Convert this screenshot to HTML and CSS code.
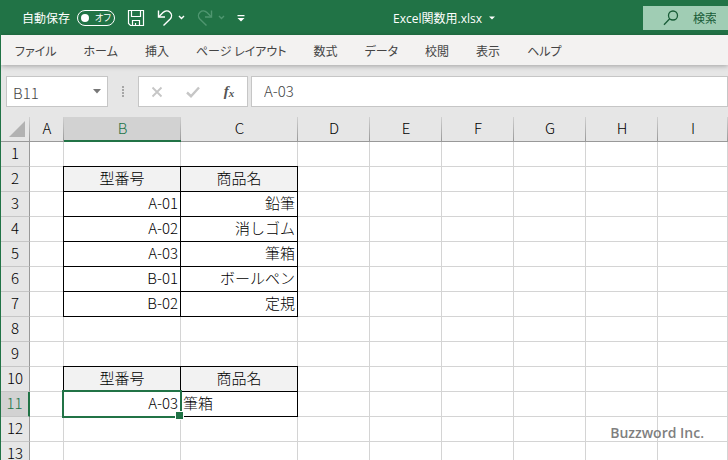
FILE: index.html
```html
<!DOCTYPE html>
<html lang="ja">
<head>
  <meta charset="UTF-8">
  <meta name="viewport" content="width=device-width, initial-scale=1">
  <title>Excel関数用.xlsx</title>
  <link rel="stylesheet" href="styles.css">
</head>
<body>

<header class="title-bar">
  <div class="quick-access">
    <label class="autosave">
      自動保存
      <span class="toggle"><input type="checkbox" class="toggle-dot">オフ</span>
    </label>
    <button class="icon-btn save-btn" aria-label="上書き保存">
      <svg width="18" height="18" viewBox="0 0 18 18" fill="none" stroke="currentColor" stroke-width="1.2">
        <path d="M1.5 1.5h15v15H3.5l-2-2z"/>
        <path d="M4.5 1.5v6h9v-6M5.5 16.5v-5h7v5M8.5 16.5v-2.5"/>
      </svg>
    </button>
    <button class="icon-btn" aria-label="元に戻す">
      <svg width="16" height="18" viewBox="0 0 16 18" fill="none" stroke="currentColor" stroke-width="1.4">
        <path d="M1.5 1.5v6.5h6.5"/>
        <path d="M1.8 7.7L6 3.6C8 1.6 11 1.4 13 3.2c2 1.9 2 4.8 0.2 6.7L6.5 16.5"/>
      </svg>
      <svg class="caret" width="7" height="5" viewBox="0 0 7 5" fill="none" stroke="currentColor" stroke-width="1.4"><path d="M1 1l2.5 2.5L6 1"/></svg>
    </button>
    <button class="icon-btn redo-btn" aria-label="やり直し" disabled>
      <svg width="16" height="18" viewBox="0 0 16 18" fill="none" stroke="currentColor" stroke-width="1.4">
        <path d="M14.5 1.5v6.5H8"/>
        <path d="M14.2 7.7L10 3.6C8 1.6 5 1.4 3 3.2c-2 1.9-2 4.8-0.2 6.7L9.5 16.5"/>
      </svg>
      <svg class="caret" width="7" height="5" viewBox="0 0 7 5" fill="none" stroke="currentColor" stroke-width="1.4"><path d="M1 1l2.5 2.5L6 1"/></svg>
    </button>
    <button class="icon-btn" aria-label="クイック アクセス ツール バーのユーザー設定">
      <svg width="8" height="8" viewBox="0 0 8 8" fill="currentColor"><path d="M0.5 1h7v1.2h-7zM0.5 4h7L4 7.5z"/></svg>
    </button>
  </div>
  <button class="file-name">Excel関数用.xlsx
    <svg width="6" height="4" viewBox="0 0 6 4" fill="currentColor"><path d="M0 0.5h6L3 3.5z"/></svg>
  </button>
  <label class="search">
    <svg width="16" height="16" viewBox="0 0 16 16" fill="none" stroke="currentColor" stroke-width="1.3">
      <circle cx="10" cy="5.5" r="4.5"/><path d="M6.7 8.8L1 14.8"/>
    </svg>
    <input type="search" placeholder="検索" aria-label="検索">
  </label>
</header>

<nav class="ribbon">
  <button>ファイル</button>
  <button>ホーム</button>
  <button>挿入</button>
  <button>ページ レイアウト</button>
  <button>数式</button>
  <button>データ</button>
  <button>校閲</button>
  <button>表示</button>
  <button>ヘルプ</button>
</nav>

<div class="formula-bar">
  <div class="name-box">
    <input type="text" value="B11" aria-label="名前ボックス">
    <button aria-label="名前の一覧">
      <svg width="8" height="5" viewBox="0 0 8 5" fill="currentColor"><path d="M0 0h8L4 4.5z"/></svg>
    </button>
  </div>
  <span class="grip"><i></i><i></i><i></i><i></i></span>
  <div class="formula-actions">
    <button aria-label="キャンセル" disabled>
      <svg width="12" height="12" viewBox="0 0 12 12" fill="none" stroke="currentColor" stroke-width="1.8"><path d="M1.5 1.5l9 9M10.5 1.5l-9 9"/></svg>
    </button>
    <button aria-label="入力" disabled>
      <svg width="14" height="12" viewBox="0 0 14 12" fill="none" stroke="currentColor" stroke-width="2.4"><path d="M1 6.5l4 3.7L13 1.5"/></svg>
    </button>
    <button class="fx" aria-label="関数の挿入">f<small>x</small></button>
  </div>
  <input class="formula" type="text" value="A-03" aria-label="数式バー">
</div>

<main class="sheet">
  <table>
    <colgroup>
      <col class="col-head"><col class="col-a"><col class="col-wide"><col class="col-wide">
      <col class="col"><col class="col"><col class="col"><col class="col"><col class="col"><col>
    </colgroup>
    <thead>
      <tr>
        <th class="corner"><svg width="16" height="16" viewBox="0 0 16 16" fill="#b2b2b2"><path d="M16 0v16H0z"/></svg></th>
        <th>A</th><th class="active">B</th><th>C</th><th>D</th><th>E</th><th>F</th><th>G</th><th>H</th><th>I</th>
      </tr>
    </thead>
    <tbody>
      <tr><th>1</th><td></td><td></td><td></td><td></td><td></td><td></td><td></td><td></td><td></td></tr>
      <tr><th>2</th><td></td><td class="box title">型番号</td><td class="box title">商品名</td><td></td><td></td><td></td><td></td><td></td><td></td></tr>
      <tr><th>3</th><td></td><td class="box">A-01</td><td class="box">鉛筆</td><td></td><td></td><td></td><td></td><td></td><td></td></tr>
      <tr><th>4</th><td></td><td class="box">A-02</td><td class="box">消しゴム</td><td></td><td></td><td></td><td></td><td></td><td></td></tr>
      <tr><th>5</th><td></td><td class="box">A-03</td><td class="box">筆箱</td><td></td><td></td><td></td><td></td><td></td><td></td></tr>
      <tr><th>6</th><td></td><td class="box">B-01</td><td class="box">ボールペン</td><td></td><td></td><td></td><td></td><td></td><td></td></tr>
      <tr><th>7</th><td></td><td class="box">B-02</td><td class="box">定規</td><td></td><td></td><td></td><td></td><td></td><td></td></tr>
      <tr><th>8</th><td></td><td></td><td></td><td></td><td></td><td></td><td></td><td></td><td></td></tr>
      <tr><th>9</th><td></td><td></td><td></td><td></td><td></td><td></td><td></td><td></td><td></td></tr>
      <tr><th>10</th><td></td><td class="box title">型番号</td><td class="box title">商品名</td><td></td><td></td><td></td><td></td><td></td><td></td></tr>
      <tr><th class="active">11</th><td></td><td class="box selected">A-03</td><td class="box left">筆箱</td><td></td><td></td><td></td><td></td><td></td><td></td></tr>
      <tr><th>12</th><td></td><td></td><td></td><td></td><td></td><td></td><td></td><td></td><td></td></tr>
      <tr><th>13</th><td></td><td></td><td></td><td></td><td></td><td></td><td></td><td></td><td></td></tr>
    </tbody>
  </table>
  <p class="credit">Buzzword Inc.</p>
</main>

</body>
</html>
```
FILE: styles.css
```css
* { margin: 0; padding: 0; box-sizing: border-box; }

body {
  font-family: "Noto Sans CJK JP", sans-serif;
  font-size: 12px;
  color: #444;
  background: #e6e6e6;
  border-left: 1px solid #217346;
  display: flex;
  flex-direction: column;
  height: 100vh;
  overflow: hidden;
}

button, input {
  font: inherit;
  color: inherit;
  background: none;
  border: none;
  outline: none;
}

svg { display: block; }

/* title bar */
.title-bar {
  display: flex;
  justify-content: space-between;
  align-items: center;
  height: 35px;
  flex-shrink: 0;
  background: #217346;
  color: #fff;
}

.quick-access {
  display: flex;
  align-items: center;
  gap: 12px;
  padding-left: 21px;
}

.autosave {
  display: flex;
  align-items: center;
  gap: 7px;
  white-space: nowrap;
}

.toggle {
  display: flex;
  align-items: center;
  gap: 6px;
  width: 38px;
  height: 16px;
  padding-left: 3px;
  border: 1px solid #fff;
  border-radius: 8px;
  font-size: 9px;
  font-feature-settings: "palt";
}

.toggle-dot {
  appearance: none;
  width: 8px;
  height: 8px;
  border-radius: 50%;
  background: #fff;
}

.icon-btn {
  display: flex;
  align-items: center;
  gap: 5px;
}

.redo-btn { color: #4f9670; }

.file-name {
  display: flex;
  align-items: center;
  gap: 7px;
  font-family: "Open Sans", "Noto Sans CJK JP", sans-serif;
  white-space: nowrap;
}

.search {
  display: flex;
  align-items: center;
  gap: 14px;
  width: 85px;
  height: 24px;
  padding-left: 20px;
  background: #a0cdb4;
  color: #185c37;
}

.search svg { flex-shrink: 0; }
.search input { min-width: 0; width: 100%; }
.search input::placeholder { color: #185c37; opacity: 1; }

/* ribbon tabs */
.ribbon {
  display: flex;
  align-items: center;
  gap: 27px;
  height: 30px;
  flex-shrink: 0;
  padding-left: 14px;
  background: #f3f2f1;
  box-shadow: 0 1px 5px rgba(0, 0, 0, 0.3);
  font-feature-settings: "palt";
}

.ribbon button { white-space: nowrap; font-feature-settings: inherit; }

/* formula bar */
.formula-bar {
  display: flex;
  align-items: stretch;
  height: 31px;
  flex-shrink: 0;
  margin: 11px 0 10px;
  padding-left: 5px;
  font-size: 15px;
  font-weight: 300;
}

.name-box, .formula-actions, .formula {
  background: #fff;
  border: 1px solid #c6c6c6;
}

.name-box {
  display: flex;
  width: 102px;
}

.name-box input { flex: 1; min-width: 0; padding: 2px 0 0 6px; }
.name-box button { width: 20px; padding-left: 6px; color: #777; }

.grip {
  display: flex;
  flex-direction: column;
  justify-content: center;
  align-items: center;
  gap: 1px;
  width: 30px;
}

.grip i { width: 2px; height: 2px; background: #a6a6a6; }

.formula-actions {
  display: flex;
  width: 110px;
}

.formula-actions button {
  flex: 1;
  display: flex;
  align-items: center;
  justify-content: center;
  color: #c6c6c6;
}

.formula-actions .fx {
  font: italic bold 15px "Liberation Serif", serif;
  color: #555;
}

.fx small { font-size: 11px; padding-top: 3px; }

.formula {
  flex: 1;
  min-width: 0;
  margin-left: 3px;
  padding: 0 0 3px 12px;
}

/* grid */
.sheet {
  flex: 1;
  min-height: 0;
  position: relative;
  overflow: hidden;
  background: #fff;
}

table {
  width: 100%;
  table-layout: fixed;
  border-collapse: separate;
  border-spacing: 0;
  font-size: 15px;
  font-weight: 300;
  line-height: 20px;
  color: #000;
}

.col-head { width: 29px; }
.col-a { width: 34px; }
.col-wide { width: 117px; }
.col { width: 72px; }

tr { height: 25px; }

td, th { padding: 0 2px 2px; }

td {
  border-right: 1px solid #d4d4d4;
  border-bottom: 1px solid #d4d4d4;
  text-align: right;
  white-space: nowrap;
}

th {
  font-weight: 300;
  background: #e6e6e6;
  border-right: 1px solid #999;
  border-bottom: 1px solid #c6c6c6;
}

thead th {
  border-bottom: 1px solid #999;
  border-right: none;
  background: linear-gradient(#d0d0d0, #999) right / 1px 100% no-repeat #e6e6e6;
}

.corner { padding: 3px 3px 3px 8px; }

th.active {
  background-color: #d2d2d2;
  color: #217346;
}

thead th.active { border-bottom: 2px solid #217346; }
tbody th.active { border-right: 2px solid #217346; }

.box {
  border-color: #000;
  box-shadow: -1px 0 #000, 0 -1px #000, -1px -1px #000;
}

.title { background: #f2f2f2; text-align: center; }
.left { text-align: left; }

.selected { position: relative; }

.selected::before {
  content: "";
  position: absolute;
  inset: -2px;
  border: 2px solid #217346;
}

/* fill handle */
.selected::after {
  content: "";
  position: absolute;
  right: -4px;
  bottom: -4px;
  width: 7px;
  height: 7px;
  background: #217346;
  border: 1px solid #fff;
}

.credit {
  position: absolute;
  right: 24px;
  bottom: 17px;
  font: 600 14px/20px "Open Sans", sans-serif;
  color: #7f7f7f;
}
```
